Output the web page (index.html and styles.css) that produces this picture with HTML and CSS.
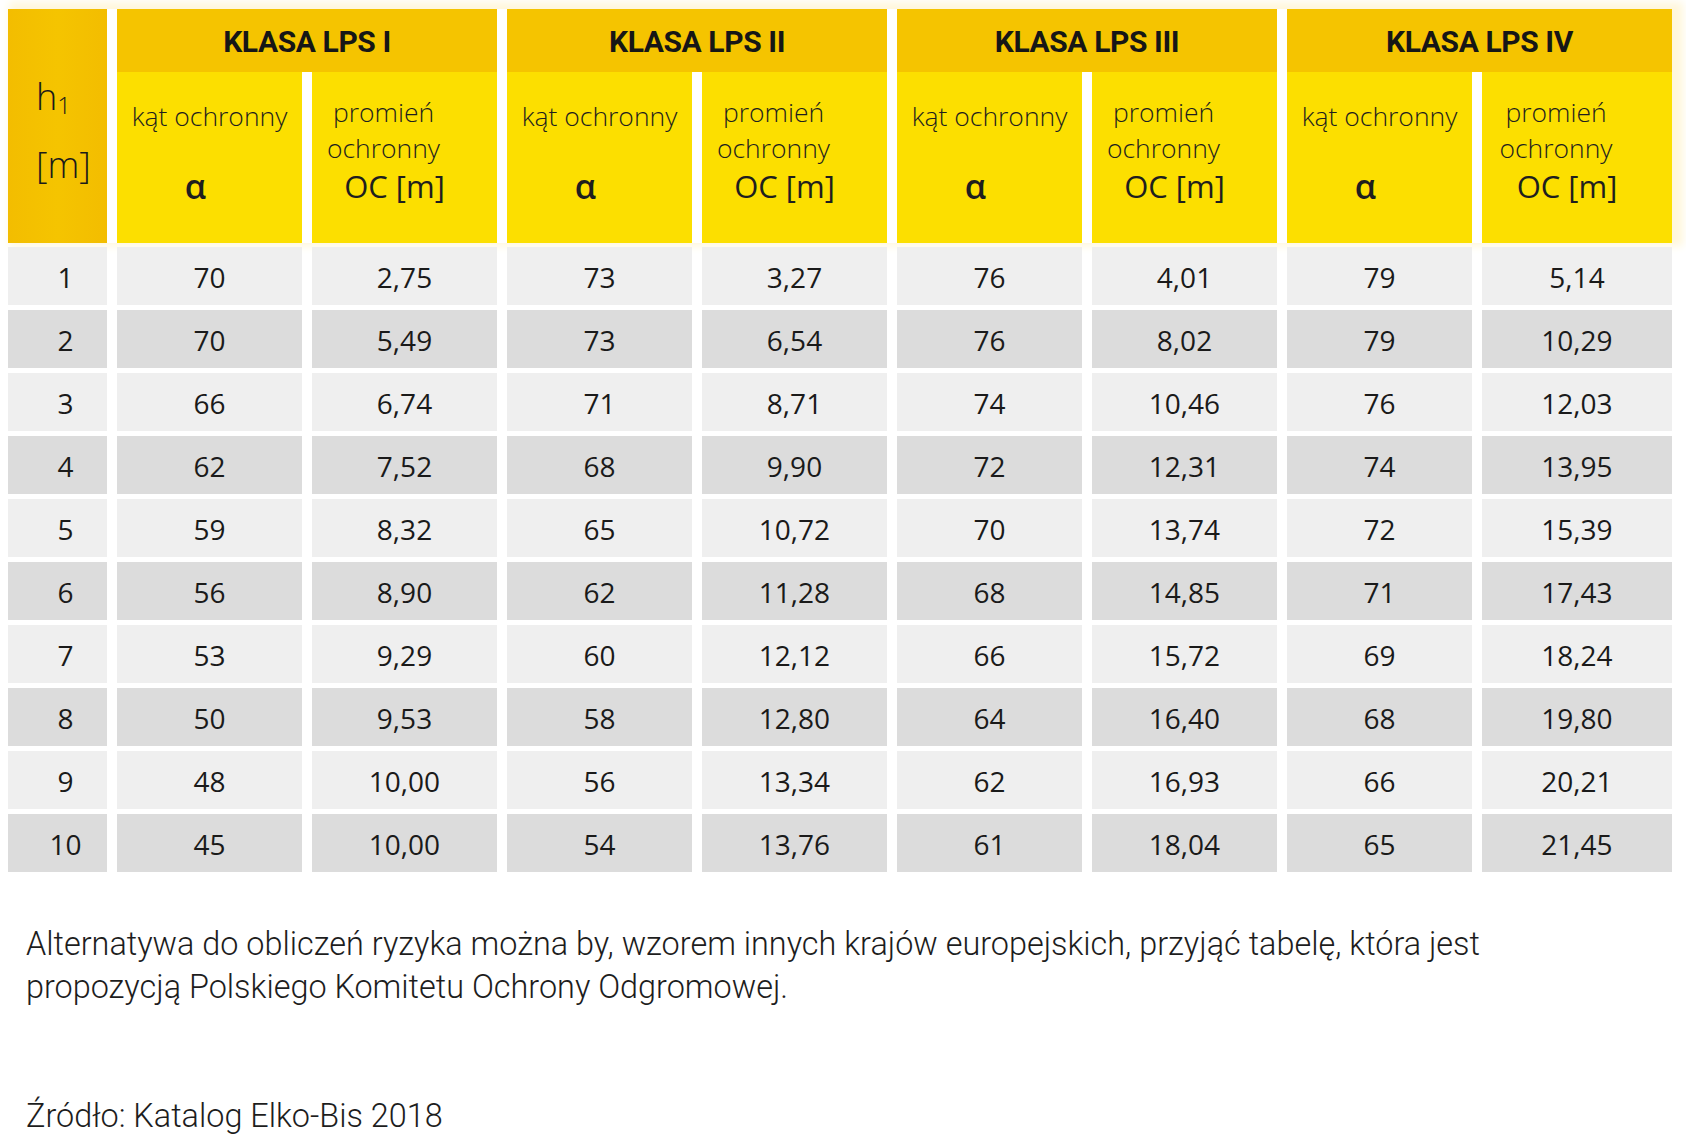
FILE: index.html
```html
<!DOCTYPE html>
<html lang="pl">
<head>
<meta charset="utf-8">
<title>Klasa LPS</title>
<link rel="stylesheet" href="styles.css">
</head>
<body>
<div class="table">
  <div class="thead">
    <div class="hcell"><span class="h">h<sub>1</sub></span><span class="m">[m]</span></div>
    <div class="band">KLASA LPS I</div>
    <div class="band">KLASA LPS II</div>
    <div class="band">KLASA LPS III</div>
    <div class="band">KLASA LPS IV</div>
    <div class="sub kat"><span class="lbl">kąt ochronny</span><span class="sym">α</span></div>
    <div class="sub prom"><span class="lbl">promień</span><span class="lbl">ochronny</span><span class="oc">OC [m]</span></div>
    <div class="sub kat"><span class="lbl">kąt ochronny</span><span class="sym">α</span></div>
    <div class="sub prom"><span class="lbl">promień</span><span class="lbl">ochronny</span><span class="oc">OC [m]</span></div>
    <div class="sub kat"><span class="lbl">kąt ochronny</span><span class="sym">α</span></div>
    <div class="sub prom"><span class="lbl">promień</span><span class="lbl">ochronny</span><span class="oc">OC [m]</span></div>
    <div class="sub kat"><span class="lbl">kąt ochronny</span><span class="sym">α</span></div>
    <div class="sub prom"><span class="lbl">promień</span><span class="lbl">ochronny</span><span class="oc">OC [m]</span></div>
  </div>
  <div class="tbody">
    <div class="row"><div class="n">1</div><div>70</div><div>2,75</div><div>73</div><div>3,27</div><div>76</div><div>4,01</div><div>79</div><div>5,14</div></div>
    <div class="row alt"><div class="n">2</div><div>70</div><div>5,49</div><div>73</div><div>6,54</div><div>76</div><div>8,02</div><div>79</div><div>10,29</div></div>
    <div class="row"><div class="n">3</div><div>66</div><div>6,74</div><div>71</div><div>8,71</div><div>74</div><div>10,46</div><div>76</div><div>12,03</div></div>
    <div class="row alt"><div class="n">4</div><div>62</div><div>7,52</div><div>68</div><div>9,90</div><div>72</div><div>12,31</div><div>74</div><div>13,95</div></div>
    <div class="row"><div class="n">5</div><div>59</div><div>8,32</div><div>65</div><div>10,72</div><div>70</div><div>13,74</div><div>72</div><div>15,39</div></div>
    <div class="row alt"><div class="n">6</div><div>56</div><div>8,90</div><div>62</div><div>11,28</div><div>68</div><div>14,85</div><div>71</div><div>17,43</div></div>
    <div class="row"><div class="n">7</div><div>53</div><div>9,29</div><div>60</div><div>12,12</div><div>66</div><div>15,72</div><div>69</div><div>18,24</div></div>
    <div class="row alt"><div class="n">8</div><div>50</div><div>9,53</div><div>58</div><div>12,80</div><div>64</div><div>16,40</div><div>68</div><div>19,80</div></div>
    <div class="row"><div class="n">9</div><div>48</div><div>10,00</div><div>56</div><div>13,34</div><div>62</div><div>16,93</div><div>66</div><div>20,21</div></div>
    <div class="row alt"><div class="n">10</div><div>45</div><div>10,00</div><div>54</div><div>13,76</div><div>61</div><div>18,04</div><div>65</div><div>21,45</div></div>
  </div>
</div>
<p class="note">Alternatywa do obliczeń ryzyka można by, wzorem innych krajów europejskich, przyjąć tabelę, która jest propozycją Polskiego Komitetu Ochrony Odgromowej.</p>
<p class="source">Źródło: Katalog Elko-Bis 2018</p>
</body>
</html>
```

FILE: styles.css
```css
html, body {
  margin: 0;
  background: #ffffff;
}

body {
  padding: 9px 0 0 8px;
  font-family: "Open Sans", "Noto Sans", sans-serif;
  color: #1c1c1c;
}

.table {
  width: 1664px;
}

.thead,
.row {
  display: grid;
  grid-template-columns: 99px repeat(7, 185px) 190px;
  column-gap: 10px;
}

.thead {
  grid-template-rows: 63px 171px;
  box-shadow: 6px -2px 8px 5px #fff7dc;
}

.hcell {
  grid-row: 1 / span 2;
  background: linear-gradient(90deg, #f3bd00 0%, #f5c400 50%, #f3bd00 100%);
  display: flex;
  flex-direction: column;
  padding: 67px 0 0 28px;
  font-weight: 300;
  font-size: 36px;
  line-height: 42px;
  color: #1a1a1a;
}

.hcell .h sub {
  font-size: 24px;
  vertical-align: -4px;
  line-height: 0;
}

.hcell .m {
  margin-top: 26px;
}

.band {
  grid-column: span 2;
  background: #f5c400;
  display: flex;
  align-items: center;
  justify-content: center;
  padding-top: 2px;
  font-family: Roboto, "Open Sans", sans-serif;
  font-weight: 700;
  font-size: 30px;
  letter-spacing: -0.4px;
  color: #161616;
}

.sub {
  background: #fcdf00;
  display: flex;
  flex-direction: column;
  align-items: center;
  color: #1e1e1e;
}

.sub .lbl {
  font-weight: 300;
  font-size: 26.5px;
  line-height: 36px;
  white-space: nowrap;
}

.kat {
  padding-top: 26px;
}

.kat .sym {
  margin-top: 34px;
  margin-right: 28px;
  font-size: 34px;
  font-weight: 600;
  line-height: 36px;
}

.prom {
  padding-top: 22px;
  padding-right: 42px;
}

.prom .oc {
  margin-left: 22px;
  font-size: 31px;
  font-weight: 400;
  line-height: 40px;
  white-space: nowrap;
}

.tbody {
  margin-top: 4px;
  display: flex;
  flex-direction: column;
  row-gap: 5px;
}

.row {
  height: 58px;
}

.row > div {
  background: #efefef;
  display: flex;
  align-items: center;
  justify-content: center;
  font-size: 28px;
  font-weight: 400;
  color: #1a1a1a;
  padding-top: 2px;
}

.row.alt > div {
  background: #dcdcdc;
}

.row > .n {
  padding-left: 16px;
}

.note,
.source {
  margin: 0 0 0 18px;
  font-family: Roboto, "Open Sans", sans-serif;
  font-weight: 300;
  font-size: 32.4px;
  line-height: 43px;
  color: #1d1d1d;
  max-width: 1500px;
}

.note {
  margin-top: 51px;
}

.source {
  margin-top: 86px;
}
```
